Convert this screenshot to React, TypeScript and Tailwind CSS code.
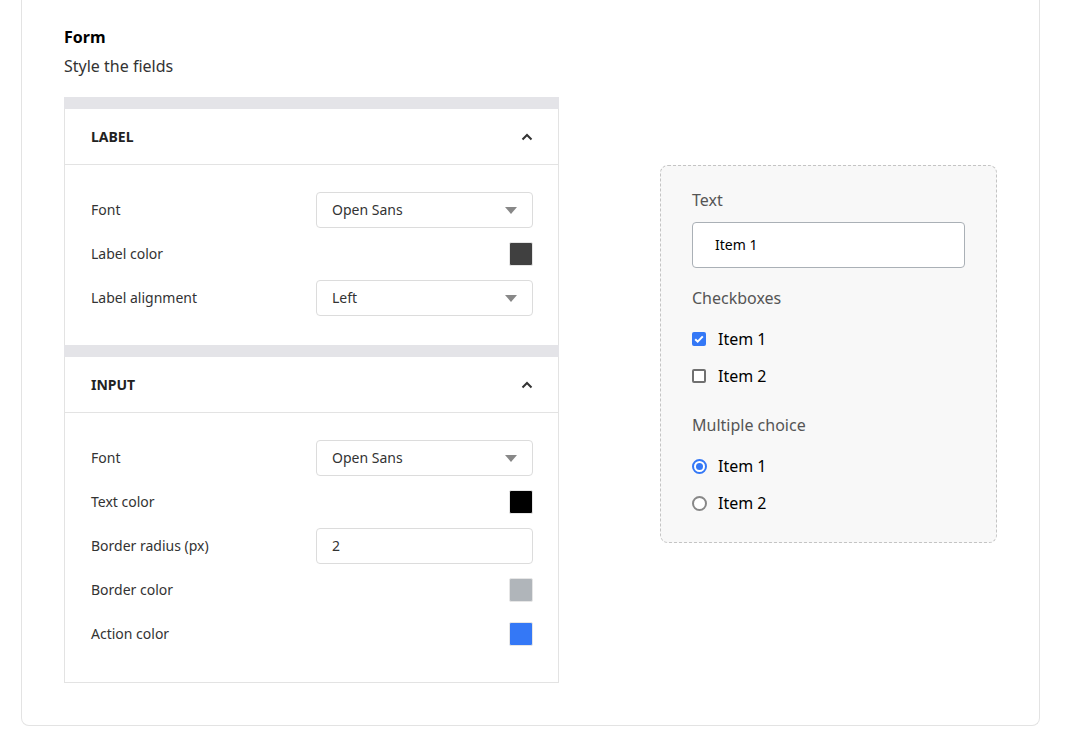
import React from 'react';

const font = { fontFamily: '"Noto Sans", "Open Sans", sans-serif' };

function Caret() {
  return (
    <svg width="12" height="7" viewBox="0 0 12 7" className="shrink-0">
      <path d="M0 0h12L6 7z" fill="#888" />
    </svg>
  );
}

function ChevronUp() {
  return (
    <svg width="12" height="8" viewBox="0 0 12 8" className="shrink-0">
      <path d="M1.5 6.5L6 2l4.5 4.5" fill="none" stroke="#333" strokeWidth="2" />
    </svg>
  );
}

function Select({ value }: { value: string }) {
  return (
    <div className="flex h-9 w-[217px] items-center justify-between rounded-[4px] border border-[#dcdcdc] bg-white pl-[15px] pr-[15px] text-sm text-[#333]">
      <span>{value}</span>
      <Caret />
    </div>
  );
}

function Swatch({ color }: { color: string }) {
  return (
    <div className="flex w-[217px] justify-end">
      <div className="h-6 w-6 rounded-[2px] border border-[#e6e6e6]" style={{ backgroundColor: color }} />
    </div>
  );
}

function Row({ label, children }: { label: string; children: React.ReactNode }) {
  return (
    <div className="flex h-9 items-center justify-between">
      <span className="text-sm text-[#333]">{label}</span>
      {children}
    </div>
  );
}

function Section({ title, last, children }: { title: string; last?: boolean; children: React.ReactNode }) {
  return (
    <div>
      <div className="h-3 bg-[#e4e4e8]" />
      <div className="flex h-14 items-center justify-between border-x border-b border-[#e3e3e3] pl-[26px] pr-[25px]">
        <span className="text-sm font-bold text-[#222]">{title}</span>
        <ChevronUp />
      </div>
      <div
        className={
          last
            ? 'flex flex-col gap-2 border-x border-[#e3e3e3] pb-[30px] pl-[26px] pr-[25px] pt-[27px]'
            : 'flex flex-col gap-2 border-x border-[#e3e3e3] pb-[29px] pl-[26px] pr-[25px] pt-[27px]'
        }
      >
        {children}
      </div>
    </div>
  );
}

function Check({ checked }: { checked?: boolean }) {
  if (checked) {
    return (
      <div className="flex h-[14px] w-[14px] items-center justify-center rounded-[2px] bg-[#3478f6]">
        <svg width="10" height="8" viewBox="0 0 10 8">
          <path d="M1.2 4.2l2.5 2.4L8.8 1.4" fill="none" stroke="#fff" strokeWidth="2" />
        </svg>
      </div>
    );
  }
  return <div className="h-[14px] w-[14px] rounded-[2px] border-2 border-[#707070] bg-white" />;
}

function Radio({ checked }: { checked?: boolean }) {
  if (checked) {
    return (
      <div className="flex h-[15px] w-[15px] items-center justify-center rounded-full border-2 border-[#3478f6] bg-white">
        <div className="h-[7px] w-[7px] rounded-full bg-[#3478f6]" />
      </div>
    );
  }
  return <div className="h-[15px] w-[15px] rounded-full border-2 border-[#888] bg-white" />;
}

export default function App() {
  return (
    <div className="min-h-screen bg-white" style={font}>
      <div className="ml-[21px] w-[1019px] rounded-b-lg border-x border-b border-[#e3e3e3] px-[42px] pb-[42px] pt-[25px]">
        <div className="text-base font-bold leading-6 text-black">Form</div>
        <div className="mt-[5px] text-base leading-6 text-[#333]">Style the fields</div>

        <div className="mt-[19px] flex items-start justify-between">
          <div className="w-[495px] border-b border-[#e3e3e3]">
            <Section title="LABEL">
              <Row label="Font">
                <Select value="Open Sans" />
              </Row>
              <Row label="Label color">
                <Swatch color="#404040" />
              </Row>
              <Row label="Label alignment">
                <Select value="Left" />
              </Row>
            </Section>
            <Section title="INPUT" last>
              <Row label="Font">
                <Select value="Open Sans" />
              </Row>
              <Row label="Text color">
                <Swatch color="#000000" />
              </Row>
              <Row label="Border radius (px)">
                <div className="flex h-9 w-[217px] items-center rounded-[4px] border border-[#dcdcdc] bg-white px-[15px] text-sm text-[#333]">
                  2
                </div>
              </Row>
              <Row label="Border color">
                <Swatch color="#b0b5ba" />
              </Row>
              <Row label="Action color">
                <Swatch color="#3478f6" />
              </Row>
            </Section>
          </div>

          <div className="mt-[68px] w-[337px] rounded-lg border border-dashed border-[#c4c4c4] bg-[#f8f8f8] px-[31px] pb-[27px] pt-[22px]">
            <div className="text-base leading-6 text-[#555]">Text</div>
            <div className="mt-[10px] flex h-[46px] items-center rounded-[4px] border border-[#aab0b6] bg-white px-[22px] text-sm text-black">
              Item 1
            </div>
            <div className="mt-[18px] text-base leading-6 text-[#555]">Checkboxes</div>
            <div className="mt-[17px] flex h-6 items-center gap-[12px] text-base text-black">
              <Check checked />
              <span>Item 1</span>
            </div>
            <div className="mt-[13px] flex h-6 items-center gap-[12px] text-base text-black">
              <Check />
              <span>Item 2</span>
            </div>
            <div className="mt-[25px] text-base leading-6 text-[#555]">Multiple choice</div>
            <div className="mt-[17px] flex h-6 items-center gap-[11px] text-base text-black">
              <Radio checked />
              <span>Item 1</span>
            </div>
            <div className="mt-[13px] flex h-6 items-center gap-[11px] text-base text-black">
              <Radio />
              <span>Item 2</span>
            </div>
          </div>
        </div>
      </div>
    </div>
  );
}
